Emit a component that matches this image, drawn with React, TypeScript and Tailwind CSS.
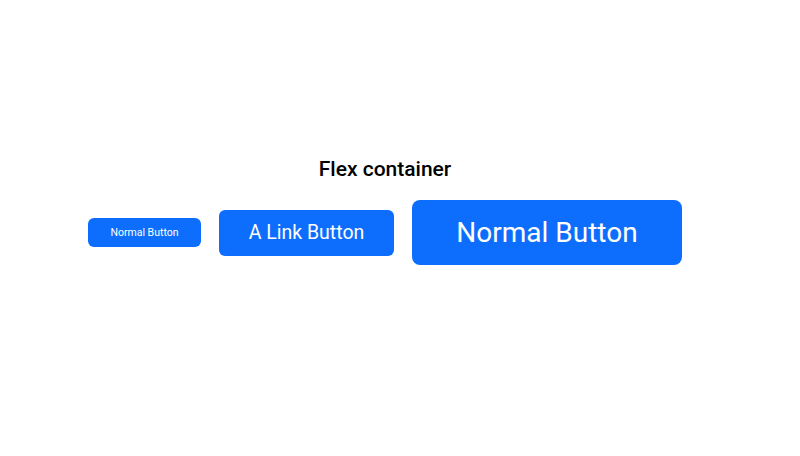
export default function App() {
  return (
    <div className="h-[456px] w-[800px] bg-white pt-[157px] pr-[30px] font-['Roboto',sans-serif]">
      <h1 className="text-center text-[21px] font-medium leading-6 text-black">Flex container</h1>
      <div className="mt-[19px] flex items-center justify-center gap-[18px]">
        <button className="h-[29px] w-[113px] rounded-[6px] bg-[#0d6efd] text-[10.5px] text-white">
          Normal Button
        </button>
        <a href="#" className="flex h-[46px] w-[175px] items-center justify-center rounded-[6px] bg-[#0d6efd] text-[19.5px] text-white">
          A Link Button
        </a>
        <button className="h-[65px] w-[270px] rounded-[8px] bg-[#0d6efd] text-[28px] text-white">
          Normal Button
        </button>
      </div>
    </div>
  );
}
